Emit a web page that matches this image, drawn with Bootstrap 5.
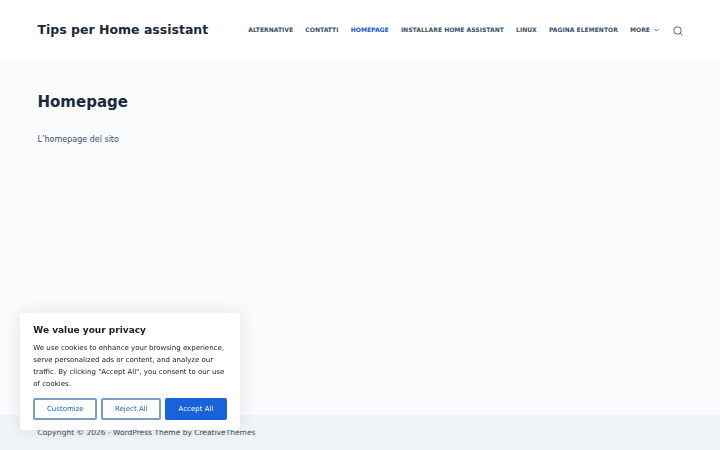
<!DOCTYPE html>
<html lang="it">
<head>
    <meta charset="UTF-8">
    <meta name="viewport" content="width=device-width, initial-scale=1.0">
    <title>Homepage - Tips per Home assistant</title>
    <link href="https://cdn.jsdelivr.net/npm/bootstrap@5.3.1/dist/css/bootstrap.min.css" rel="stylesheet">
    <style>
        html, body {
            height: 100%;
            overflow: hidden;
        }
        body {
            font-family: "DejaVu Sans", sans-serif;
            background-color: #f9fbfd;
            color: #3a4f66;
            font-size: 9px;
        }
        .site-wrap {
            height: 450px;
        }
        .site-header {
            height: 60px;
            background-color: #fff;
            padding: 0 37px 0 37.5px;
        }
        .site-title {
            font-size: 12.5px;
            font-weight: 700;
            color: #192a3d;
            white-space: nowrap;
        }
        .menu {
            gap: 12.2px;
        }
        .menu a {
            font-size: 6.05px;
            font-weight: 700;
            color: #3a4f66;
            text-decoration: none;
            text-transform: uppercase;
            white-space: nowrap;
        }
        .menu a.active {
            color: #1559d6;
        }
        .search-icon {
            margin-left: 14px;
            margin-top: 1px;
        }
        .page-main {
            padding: 32px 37.5px 0;
        }
        .page-main h1 {
            font-size: 15px;
            font-weight: 700;
            color: #192a3d;
            margin-bottom: 21px;
            line-height: 20px;
        }
        .page-main p {
            font-size: 8px;
            line-height: 14px;
            color: #3a4f66;
        }
        .site-footer {
            height: 35px;
            background-color: #f2f5f7;
            padding: 10.5px 37.5px 0;
            font-size: 7.5px;
            line-height: 14px;
        }
        .cookie-box {
            position: fixed;
            left: 20px;
            top: 313px;
            width: 220px;
            height: 117px;
            background-color: #fff;
            border-radius: 3px;
            box-shadow: 0 0 18px rgba(0, 0, 0, .1);
            padding: 10.5px 13.3px;
        }
        .cookie-box h2 {
            font-size: 9px;
            font-weight: 700;
            color: #212121;
            line-height: 13px;
            margin-bottom: 5.5px;
        }
        .cookie-box p {
            font-size: 7px;
            line-height: 12px;
            color: #212121;
            margin-bottom: 7.5px;
        }
        .cookie-btn {
            height: 22px;
            font-size: 7px;
            line-height: 18px;
            padding: 0;
            border-radius: 2px;
            border: 2px solid #7d9cc4;
            color: #1863dc;
            background-color: #fff;
        }
        .btn-customize {
            width: 64px;
        }
        .btn-reject {
            width: 60px;
        }
        .btn-accept {
            width: 61.4px;
        }
        .cookie-btn.btn-accept {
            background-color: #1863dc;
            border-color: #1863dc;
            color: #fff;
        }
    </style>
</head>
<body>
<div class="site-wrap d-flex flex-column">
    <header class="site-header d-flex align-items-center justify-content-between">
        <a class="site-title text-decoration-none" href="#">Tips per Home assistant</a>
        <nav class="d-flex align-items-center">
            <div class="menu d-flex align-items-center">
                <a href="#">Alternative</a>
                <a href="#">Contatti</a>
                <a href="#" class="active">Homepage</a>
                <a href="#">Installare Home Assistant</a>
                <a href="#">Linux</a>
                <a href="#">Pagina Elementor</a>
                <a href="#" class="d-flex align-items-center gap-1">More
                    <svg width="5" height="4" viewBox="0 0 10 8" fill="none" stroke="#3a4f66" stroke-width="1.6"><path d="M1 2l4 4 4-4"/></svg>
                </a>
            </div>
            <svg class="search-icon" width="10" height="10" viewBox="0 0 20 20" fill="none" stroke="#3a4f66" stroke-width="1.7"><circle cx="9" cy="9" r="7.4"/><path d="M14.5 14.5l4.5 4.5"/></svg>
        </nav>
    </header>

    <main class="page-main flex-grow-1">
        <h1>Homepage</h1>
        <p>L’homepage del sito</p>
    </main>

    <footer class="site-footer">
        Copyright © 2026 - WordPress Theme by CreativeThemes
    </footer>
</div>

<!-- Cookie banner -->
<div class="cookie-box">
    <h2>We value your privacy</h2>
    <p>We use cookies to enhance your browsing experience, serve personalized ads or content, and analyze our traffic. By clicking "Accept All", you consent to our use of cookies.</p>
    <div class="d-flex gap-1">
        <button class="btn cookie-btn btn-customize">Customize</button>
        <button class="btn cookie-btn btn-reject">Reject All</button>
        <button class="btn cookie-btn btn-accept">Accept All</button>
    </div>
</div>

<script src="https://cdn.jsdelivr.net/npm/bootstrap@5.3.1/dist/js/bootstrap.bundle.min.js"></script>
</body>
</html>
